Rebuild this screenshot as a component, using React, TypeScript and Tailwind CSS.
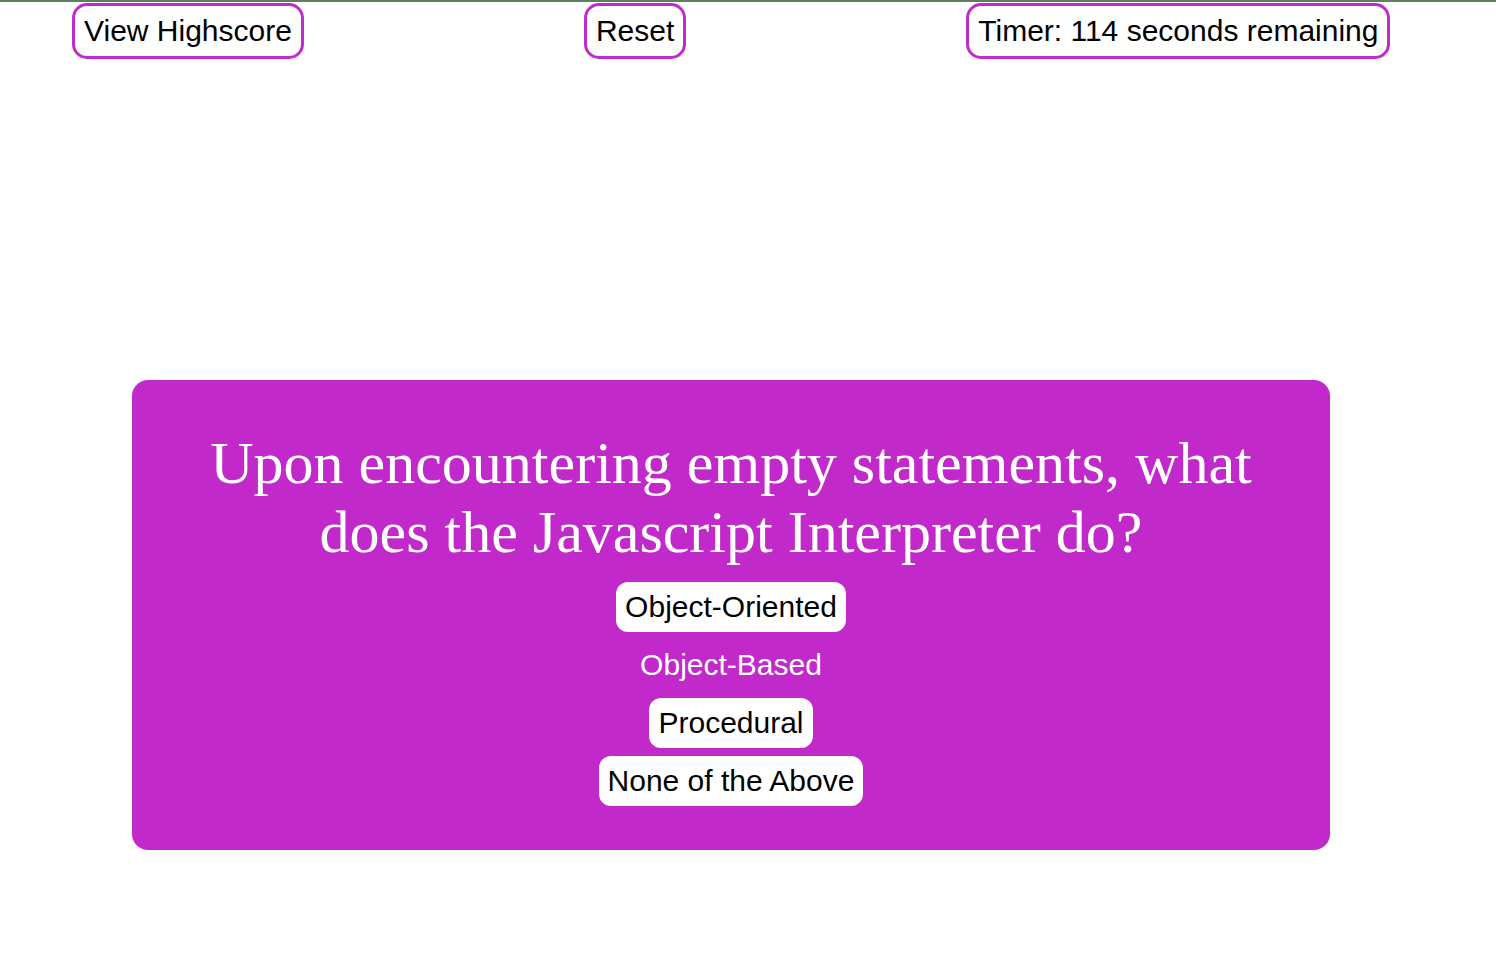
import React from "react";

export default function App() {
  const answers = ["Object-Oriented", "Object-Based", "Procedural", "None of the Above"];
  return (
    <div className="min-h-[976px] w-[1496px] bg-white border-t-2 border-[#5f7e5d]" style={{ fontFamily: '"Liberation Sans", Arial, sans-serif' }}>
      <div className="flex items-start pt-[1px] pl-[72px]">
        <button className="border-[3px] border-[#c22bcb] rounded-[15px] px-[9px] py-[8px] text-[30px] leading-[34px] text-black bg-white">View Highscore</button>
        <button className="ml-[280px] border-[3px] border-[#c22bcb] rounded-[15px] px-[9px] py-[8px] text-[30px] leading-[34px] text-black bg-white">Reset</button>
        <button className="ml-[280px] border-[3px] border-[#c22bcb] rounded-[15px] px-[9px] py-[8px] text-[30px] leading-[34px] text-black bg-white whitespace-nowrap">Timer: 114 seconds remaining</button>
      </div>
      <div className="mt-[321px] ml-[132px] w-[1198px] h-[470px] bg-[#c229cb] rounded-[16px] flex flex-col items-center pt-[49px] px-[40px]">
        <h1 className="text-white text-center text-[60px] leading-[69px] mb-[15px]" style={{ fontFamily: '"Liberation Serif", "Times New Roman", serif' }}>
          Upon encountering empty statements, what does the Javascript Interpreter do?
        </h1>
        <div className="flex flex-col items-center gap-2">
          {answers.map((a, i) => (
            <button
              key={a}
              className={
                i === 1
                  ? "px-[9px] py-[8px] text-[30px] leading-[34px] rounded-[12px] text-white bg-transparent"
                  : "px-[9px] py-[8px] text-[30px] leading-[34px] rounded-[12px] text-black bg-white"
              }
            >
              {a}
            </button>
          ))}
        </div>
      </div>
    </div>
  );
}
